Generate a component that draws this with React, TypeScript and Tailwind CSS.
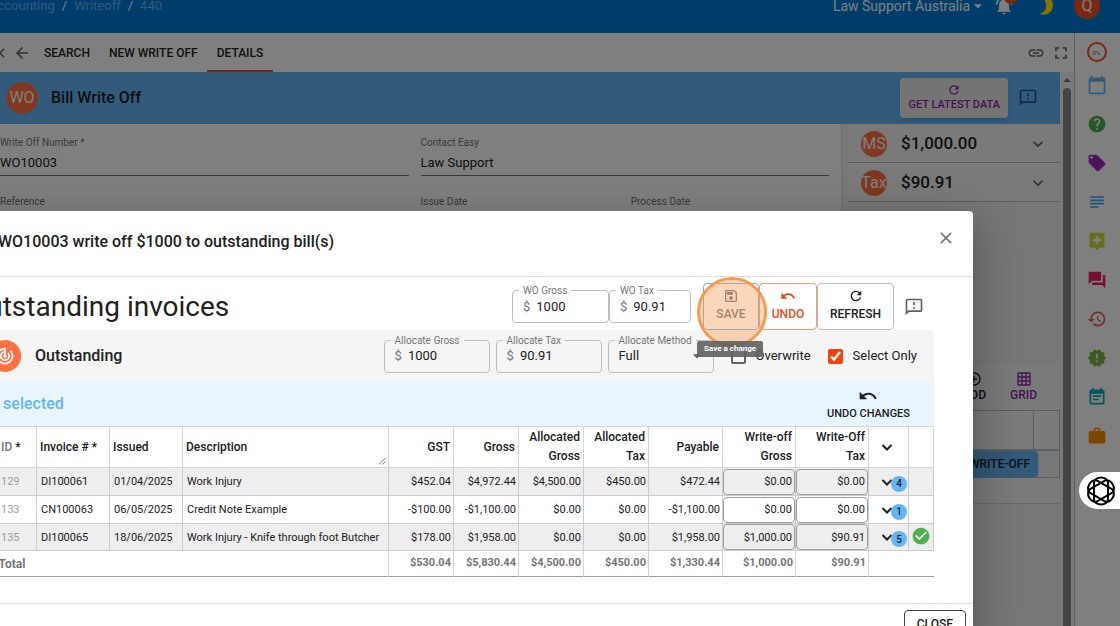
import React, { useState } from 'react';
import {
  MdAddCircleOutline,
  MdArrowBack,
  MdArrowDropDown,
  MdAssistant,
  MdCalendarToday,
  MdCheckCircle,
  MdClose,
  MdEventNote,
  MdExpandMore,
  MdForum,
  MdFullscreen,
  MdGridOn,
  MdHelp,
  MdHistory,
  MdLink,
  MdLocalOffer,
  MdNewReleases,
  MdNotificationsActive,
  MdOutlineFeedback,
  MdOutlineSave,
  MdRefresh,
  MdSubject,
  MdTrackChanges,
  MdWork,
} from 'react-icons/md';

interface Invoice {
  id: string;
  number: string;
  issued: string;
  description: string;
  amounts: string[];
  gross: string;
  tax: string;
  count: number;
  done?: boolean;
}

const invoices: Invoice[] = [
  {
    id: '129',
    number: 'DI100061',
    issued: '01/04/2025',
    description: 'Work Injury',
    amounts: ['$452.04', '$4,972.44', '$4,500.00', '$450.00', '$472.44'],
    gross: '$0.00',
    tax: '$0.00',
    count: 4,
  },
  {
    id: '133',
    number: 'CN100063',
    issued: '06/05/2025',
    description: 'Credit Note Example',
    amounts: ['-$100.00', '-$1,100.00', '$0.00', '$0.00', '-$1,100.00'],
    gross: '$0.00',
    tax: '$0.00',
    count: 1,
  },
  {
    id: '135',
    number: 'DI100065',
    issued: '18/06/2025',
    description: 'Work Injury - Knife through foot Butcher',
    amounts: ['$178.00', '$1,958.00', '$0.00', '$0.00', '$1,958.00'],
    gross: '$1,000.00',
    tax: '$90.91',
    count: 5,
    done: true,
  },
];

const totals = ['$530.04', '$5,830.44', '$4,500.00', '$450.00', '$1,330.44', '$1,000.00', '$90.91'];

const amountHeads = ['GST', 'Gross', 'Allocated Gross', 'Allocated Tax', 'Payable', 'Write-off Gross', 'Write-Off Tax'];

const UndoIcon: React.FC<{ className?: string }> = ({ className }) => (
  <svg viewBox="0 0 24 24" fill="currentColor" className={className}>
    <path d="M12.5 8c-2.65 0-5.05.99-6.9 2.6L2 7v9h9l-3.62-3.62c1.39-1.16 3.16-1.88 5.12-1.88 3.54 0 6.55 2.31 7.6 5.5l2.37-.78C21.08 11.03 17.15 8 12.5 8z" />
  </svg>
);

const ChevronIcon: React.FC<{ className?: string }> = ({ className }) => (
  <svg viewBox="0 0 16 16" fill="none" stroke="currentColor" strokeWidth="2" className={className}>
    <path d="M3.500 6L8 10.500L12.500 6" />
  </svg>
);

interface MoneyFieldProps {
  id: string;
  label: string;
  value: string;
  width: string;
  labelBg: string;
}

const MoneyField: React.FC<MoneyFieldProps> = ({ id, label, value, width, labelBg }) => (
  <div className={`relative flex h-[33px] items-center rounded border border-[#bdbdbd] px-2.5 ${width}`}>
    <label htmlFor={id} className={`absolute -top-2 left-1.5 px-1 text-[10px] leading-4 whitespace-nowrap text-[#757575] ${labelBg}`}>
      {label}
    </label>
    <span className="mr-1.5 text-[13px] text-[#757575]">$</span>
    <input id={id} defaultValue={value} className="w-full min-w-0 bg-transparent text-[13px] text-[#212121] outline-none" />
  </div>
);

const TextField: React.FC<{ id: string; label: string; value?: string; className?: string }> = ({ id, label, value, className }) => (
  <div className={`flex flex-col ${className ?? ''}`}>
    <label htmlFor={id} className="text-[10px] leading-4 text-[#757575]">
      {label}
    </label>
    <input
      id={id}
      defaultValue={value}
      className="h-[25px] w-full border-b border-[#757575] bg-transparent pb-0.5 text-[13px] text-[#212121] outline-none"
    />
  </div>
);

const TopBar: React.FC = () => (
  <header className="-mt-[21px] flex h-[54px] items-center justify-between bg-[#007ad6] text-[13px] shadow">
    <nav className="-ml-[11px] flex gap-[7px] text-[#64b5f6]">
      <a href="#accounting">Accounting</a>
      <span className="text-white">/</span>
      <a href="#writeoff">Writeoff</a>
      <span className="text-white">/</span>
      <a href="#440">440</a>
    </nav>
    <div className="flex items-center pr-5">
      <button className="flex items-center text-[14px] text-white">
        Law Support Australia
        <MdArrowDropDown className="-mr-1 -ml-0.5 h-5 w-5" />
      </button>
      <button aria-label="Notifications" className="relative ml-2.5 text-white">
        <MdNotificationsActive className="h-5 w-5" />
        <span className="absolute -top-1.5 left-2.5 h-3.5 w-3.5 rounded-full bg-[#f4511e]" />
      </button>
      <button aria-label="Dark mode" className="ml-5 text-[#ffeb00]">
        <svg viewBox="0 0 20 20" fill="currentColor" className="h-5 w-5">
          <path d="M6 0a11 11 0 0 1 6 9c0 5-2 8-7 9 9 3 14-3 14-9S14-1 6 0z" />
        </svg>
      </button>
      <span className="ml-5 flex h-[26px] w-[26px] items-center justify-center rounded-full bg-[#f4511e] text-base text-white">Q</span>
    </div>
  </header>
);

const TabBar: React.FC = () => (
  <div className="flex h-[39px] items-center bg-white text-[12px] font-medium text-[#212121]">
    <button aria-label="Close" className="-ml-2">
      <MdClose className="h-4 w-4 text-[#616161]" />
    </button>
    <button aria-label="Back" className="ml-[5px]">
      <MdArrowBack className="h-[18px] w-[18px] text-[#616161]" />
    </button>
    <nav className="ml-[3px] flex h-full">
      <a href="#search" className="flex items-center px-2.5">SEARCH</a>
      <a href="#new" className="flex items-center px-[9px]">NEW WRITE OFF</a>
      <a href="#details" className="flex items-center border-y-2 border-t-transparent border-b-[#f4511e] px-2.5">DETAILS</a>
    </nav>
    <div className="mr-[3px] ml-auto flex items-center gap-1.5 text-[#616161]">
      <MdLink className="h-[18px] w-[18px]" />
      <MdFullscreen className="h-5 w-5" />
    </div>
  </div>
);

const SummaryRow: React.FC<{ badge: string; amount: string }> = ({ badge, amount }) => (
  <div className="flex h-[39px] items-center border-b border-[#bdbdbd] bg-[#f5f5f5] pt-px pr-3 pl-[13px]">
    <span className="flex h-[26px] w-[26px] items-center justify-center rounded-full bg-[#ff7043] text-base text-white">{badge}</span>
    <span className="ml-3.5 text-[17px] font-medium text-[#212121]">{amount}</span>
    <MdExpandMore className="ml-auto h-5 w-5 text-[#616161]" />
  </div>
);

const WriteOffPage: React.FC = () => (
  <main className="flex min-w-0 flex-1 flex-col bg-[#eeeeee]">
    <div className="flex h-[52px] shrink-0 items-center bg-[#64b5f6] px-1.5">
      <span className="flex h-8 w-8 items-center justify-center rounded-full bg-[#ff7043] text-base text-white">WO</span>
      <h1 className="ml-[13px] text-base font-medium text-[#212121]">Bill Write Off</h1>
      <button className="ml-auto flex h-10 flex-col items-center justify-center rounded bg-[#e8e8e8] px-2 text-[11px] leading-4 font-medium text-[#8e24aa] shadow-md">
        <MdRefresh className="h-3.5 w-3.5" />
        GET LATEST DATA
      </button>
      <MdOutlineFeedback className="mr-4 ml-2.5 h-5 w-5 text-[#1e5a8c]" />
    </div>

    <div className="flex h-[240px] shrink-0">
      <section className="flex flex-1 flex-col gap-[18px] border-r border-[#e0e0e0] bg-white pt-[11px] pr-3">
        <div className="grid grid-cols-2 gap-3">
          <TextField id="number" label="Write Off Number *" value="WO10003" />
          <TextField id="contact" label="Contact Easy" value="Law Support" />
        </div>
        <div className="grid grid-cols-4 gap-3">
          <TextField id="reference" label="Reference" className="col-span-2" />
          <TextField id="issue" label="Issue Date" />
          <TextField id="process" label="Process Date" />
        </div>
      </section>
      <aside className="w-[218px] pl-1.5">
        <SummaryRow badge="MS" amount="$1,000.00" />
        <SummaryRow badge="Tax" amount="$90.91" />
      </aside>
    </div>

    <div className="flex h-[46px] shrink-0 items-center justify-end gap-6 bg-[#f5f5f5] pr-[23px] text-[12px] leading-4 font-medium">
      <button className="flex flex-col items-center text-[#212121]">
        <MdAddCircleOutline className="h-4 w-4" />
        ADD
      </button>
      <button className="flex flex-col items-center text-[#8e24aa]">
        <MdGridOn className="h-4 w-4" />
        GRID
      </button>
    </div>
    <div className="flex h-10 shrink-0 justify-end border border-[#bdbdbd] bg-[#f5f5f5]">
      <div className="w-[26px] border-l border-[#bdbdbd]" />
    </div>
    <div className="flex h-7 shrink-0 items-center justify-end border border-[#bdbdbd] bg-[#eeeeee] pr-[21px]">
      <button className="h-[26px] rounded bg-[#64b5f6] px-2 text-[12px] font-medium text-[#212121] shadow">ADD WRITE-OFF</button>
    </div>
    <div className="h-[26px] shrink-0 border-b border-[#d0d0d0] bg-[#f5f5f5]" />
  </main>
);

const ScrollRail: React.FC = () => (
  <div className="flex w-3.5 flex-col items-center bg-[#f5f5f5] pt-1.5">
    <div className="h-0 w-0 border-x-4 border-b-4 border-x-transparent border-b-[#757575]" />
    <div className="mt-1.5 w-2 flex-1 rounded-t bg-[#8a8a8a]" />
  </div>
);

const SideRail: React.FC = () => (
  <aside className="flex w-[46px] flex-col items-center gap-[19px] border-l border-[#bdbdbd] bg-white pt-[9px] pr-0.5">
    <span className="-mb-1.5 flex h-5 w-5 items-center justify-center rounded-full border-2 border-[#f4511e] text-[6px] text-[#616161]">0%</span>
    <MdCalendarToday className="h-5 w-5 text-[#64b5f6]" />
    <MdHelp className="h-5 w-5 text-[#4caf50]" />
    <MdLocalOffer className="h-5 w-5 text-[#9c27b0]" />
    <MdSubject className="h-5 w-5 text-[#42a5f5]" />
    <MdAssistant className="h-5 w-5 text-[#cddc39]" />
    <MdForum className="h-5 w-5 text-[#e91e63]" />
    <MdHistory className="h-5 w-5 text-[#ef5350]" />
    <MdNewReleases className="h-5 w-5 text-[#7cb342]" />
    <MdEventNote className="h-5 w-5 text-[#00acc1]" />
    <MdWork className="h-5 w-5 text-[#fb8c00]" />
  </aside>
);

const InvoiceTable: React.FC = () => (
  <table className="w-full table-fixed border-collapse border-b border-[#9e9e9e] text-[11px] text-[#212121]">
    <colgroup>
      <col className="w-[68px]" />
      <col className="w-[73px]" />
      <col className="w-[73px]" />
      <col />
      <col className="w-[65px]" />
      <col className="w-[65px]" />
      <col className="w-[65px]" />
      <col className="w-[65px]" />
      <col className="w-[74px]" />
      <col className="w-[73px]" />
      <col className="w-[73px]" />
      <col className="w-[40px]" />
      <col className="w-[25px]" />
    </colgroup>
    <thead>
      <tr className="h-[41px] text-left text-[12px]">
        <th className="border border-[#d6d6d6] pr-1 pl-8 font-medium"><span className="text-[#757575]">ID</span> *</th>
        <th className="border border-[#d6d6d6] px-[3px] font-medium">Invoice # *</th>
        <th className="border border-[#d6d6d6] px-[3px] font-medium">Issued</th>
        <th className="relative border border-[#d6d6d6] px-[3px] font-medium">
          Description
          <svg viewBox="0 0 8 8" className="absolute right-0.5 bottom-0.5 h-2 w-2" stroke="#757575">
            <path d="M1 7.500L7.500 1M4.500 7.500L7.500 4.500" />
          </svg>
        </th>
        {amountHeads.map((head) => (
          <th key={head} className="border border-[#d6d6d6] px-[3px] text-right leading-[19px] font-medium">{head}</th>
        ))}
        <th className="border border-[#d6d6d6] p-0">
          <ChevronIcon className="ml-2.5 h-4 w-4" />
        </th>
        <th className="border border-[#d6d6d6]" />
      </tr>
    </thead>
    <tbody>
      {invoices.map((row) => (
        <tr key={row.id} className="h-[28px] odd:bg-[#eeeeee] last:h-[27px]">
          <td className="border border-[#cccccc] pt-0.5 pr-1 pl-8 text-[#9e9e9e]">{row.id}</td>
          <td className="border border-[#cccccc] px-1 pt-0.5">{row.number}</td>
          <td className="border border-[#cccccc] px-1 pt-0.5">{row.issued}</td>
          <td className="border border-[#cccccc] px-1 pt-0.5 whitespace-nowrap">{row.description}</td>
          {row.amounts.map((amount, i) => (
            <td key={i} className="border border-[#cccccc] px-0.5 pt-0.5 text-right">{amount}</td>
          ))}
          {[row.gross, row.tax].map((amount, i) => (
            <td key={i} className="border border-[#cccccc] p-0">
              <input
                aria-label={`${i === 0 ? 'Write-off gross' : 'Write-off tax'} ${row.number}`}
                defaultValue={amount}
                className="block h-[26px] w-full rounded border border-[#9e9e9e] bg-transparent px-0.5 text-right outline-none"
              />
            </td>
          ))}
          <td className="border border-[#cccccc] p-0">
            <button aria-label="Expand" className="relative ml-2.5 block">
              <ChevronIcon className="h-4 w-4" />
              <span className="absolute top-0.5 left-3 flex h-4 w-4 items-center justify-center rounded-full bg-[#64b5f6] text-[10px] font-medium">
                {row.count}
              </span>
            </button>
          </td>
          <td className="border border-[#cccccc] p-0 pb-0.5">{row.done && <MdCheckCircle className="mx-auto h-5 w-5 text-[#4caf50]" />}</td>
        </tr>
      ))}
    </tbody>
    <tfoot>
      <tr className="h-[26px] font-bold text-[#757575]">
        <td colSpan={4} className="border-r border-[#d6d6d6] pl-[30px] text-[12px]">Total</td>
        {totals.map((total, i) => (
          <td key={i} className="border-r border-[#d6d6d6] px-0.5 text-right">{total}</td>
        ))}
        <td colSpan={2} />
      </tr>
    </tfoot>
  </table>
);

const WriteOffDialog: React.FC = () => {
  const [overwrite, setOverwrite] = useState(false);
  const [selectOnly, setSelectOnly] = useState(true);

  return (
    <div
      role="dialog"
      aria-labelledby="dialog-title"
      className="mt-[211px] mr-[147px] -ml-[60px] min-w-0 flex-1 rounded-t bg-white shadow-[0_11px_15px_-7px_rgba(0,0,0,0.2),0_24px_38px_3px_rgba(0,0,0,0.14),0_9px_46px_8px_rgba(0,0,0,0.12)]"
    >
      <div className="flex h-[66px] items-center justify-between border-b border-[#e0e0e0] pr-[17px] pb-1 pl-[58px]">
        <h2 id="dialog-title" className="text-base font-medium text-[#212121]">WO10003 write off $1000 to outstanding bill(s)</h2>
        <button aria-label="Close dialog" className="pb-2">
          <MdClose className="h-5 w-5 text-[#757575]" />
        </button>
      </div>

      <div className="pr-[39px] pb-[26px] pl-7">
        <div className="flex h-[53px] items-center pt-1.5">
          <h3 className="text-[28px] text-[#212121]">Outstanding invoices</h3>
          <div className="ml-auto flex items-center">
            <MoneyField id="wo-gross" label="WO Gross" value="1000" width="w-[97px]" labelBg="bg-white" />
            <MoneyField id="wo-tax" label="WO Tax" value="90.91" width="w-[82px]" labelBg="bg-white" />
            <div className="relative z-10 ml-3">
              <button className="flex h-[47px] w-[56px] flex-col items-center justify-center gap-0.5 rounded border border-[#64b5f6] pb-1 text-[12px] leading-4 font-medium text-[#757575]">
                <MdOutlineSave className="h-4 w-4" />
                SAVE
              </button>
              <span className="absolute -top-1.5 -left-1.5 h-[70px] w-[70px] rounded-full border-3 border-[#f59c4f] bg-[#f59c4f]/40" />
              <span className="absolute top-[58px] -left-1.5 rounded-xs bg-[#616161]/90 px-[7px] text-[8px] leading-4 font-bold whitespace-nowrap text-white">
                Save a change
              </span>
            </div>
            <button className="flex h-[47px] w-[58px] flex-col items-center justify-center gap-0.5 rounded border border-[#f4511e]/60 pb-1 text-[12px] leading-4 font-medium text-[#e64a19]">
              <UndoIcon className="h-4 w-4" />
              UNDO
            </button>
            <button className="flex h-[47px] w-[77px] flex-col items-center justify-center gap-0.5 rounded border border-[#bdbdbd] pb-1 text-[12px] leading-4 font-medium text-[#212121]">
              <MdRefresh className="h-4 w-4" />
              REFRESH
            </button>
            <MdOutlineFeedback className="mr-2.5 ml-2.5 h-5 w-5 text-[#616161]" />
          </div>
        </div>

        <div className="flex h-[52px] items-center rounded-tr bg-[#f5f5f5] pl-[21px]">
          <span className="flex h-8 w-8 items-center justify-center rounded-full bg-[#ff7043] text-white">
            <MdTrackChanges className="h-5 w-5" />
          </span>
          <h4 className="ml-3.5 text-base font-medium text-[#212121]">Outstanding</h4>
          <div className="ml-auto flex items-center gap-1.5">
            <MoneyField id="allocate-gross" label="Allocate Gross" value="1000" width="w-[106px]" labelBg="bg-[#f5f5f5]" />
            <MoneyField id="allocate-tax" label="Allocate Tax" value="90.91" width="w-[106px]" labelBg="bg-[#f5f5f5]" />
            <div className="relative flex h-[33px] w-[106px] items-center rounded border border-[#bdbdbd] px-2.5">
              <label htmlFor="method" className="absolute -top-2 left-1.5 bg-[#f5f5f5] px-1 text-[10px] leading-4 whitespace-nowrap text-[#757575]">
                Allocate Method
              </label>
              <select id="method" className="w-full appearance-none bg-transparent text-[13px] text-[#212121] outline-none">
                <option>Full</option>
              </select>
              <MdArrowDropDown className="pointer-events-none absolute right-1.5 h-5 w-5 text-[#616161]" />
            </div>
          </div>
          <label className="ml-[17px] flex items-center gap-2.5 text-[13px] text-[#212121]">
            <input
              type="checkbox"
              checked={overwrite}
              onChange={(e) => setOverwrite(e.target.checked)}
              className="h-[15px] w-[15px] appearance-none rounded-xs border-2 border-[#616161]"
            />
            Overwrite
          </label>
          <label className="mr-[17px] ml-[17px] flex items-center gap-2.5 text-[13px] text-[#212121]">
            <input
              type="checkbox"
              checked={selectOnly}
              onChange={(e) => setSelectOnly(e.target.checked)}
              className="h-[15px] w-[15px] accent-[#f4420c]"
            />
            Select Only
          </label>
        </div>

        <div className="flex h-11 items-center justify-between bg-[#e9f5fd] pr-6 pl-[22px]">
          <span className="text-base font-medium text-[#64b5f6]">1 selected</span>
          <button className="flex flex-col items-center text-[11px] font-medium text-[#212121]">
            <UndoIcon className="h-5 w-5" />
            UNDO CHANGES
          </button>
        </div>

        <InvoiceTable />
      </div>

      <div className="flex justify-end border-t border-[#e0e0e0] px-[7px] py-1.5">
        <button className="h-7 rounded border border-[#424242] px-3 text-[12px] font-medium text-[#212121]">CLOSE</button>
      </div>
    </div>
  );
};

const App: React.FC = () => (
  <div className="relative flex h-screen flex-col overflow-hidden bg-white font-['Roboto',sans-serif]">
    <TopBar />
    <div className="flex min-h-0 flex-1">
      <div className="flex min-w-0 flex-1 flex-col">
        <TabBar />
        <div className="flex min-h-0 flex-1">
          <WriteOffPage />
          <ScrollRail />
        </div>
      </div>
      <SideRail />
    </div>

    <div className="absolute inset-0 flex overflow-hidden bg-black/50">
      <WriteOffDialog />
    </div>

    <button aria-label="Assistant" className="absolute top-[472px] right-0 flex h-[37px] w-[41px] items-center rounded-l-full bg-white pl-[7px]">
      <svg viewBox="0 0 30 30" className="h-[30px] w-[30px]" fill="none" stroke="#000" strokeWidth="2">
        <rect x="8" y="1.500" width="14" height="27" rx="7" ry="5" />
        <rect x="8" y="1.500" width="14" height="27" rx="7" ry="5" transform="rotate(60 15 15)" />
        <rect x="8" y="1.500" width="14" height="27" rx="7" ry="5" transform="rotate(120 15 15)" />
      </svg>
    </button>
  </div>
);

export default App;
